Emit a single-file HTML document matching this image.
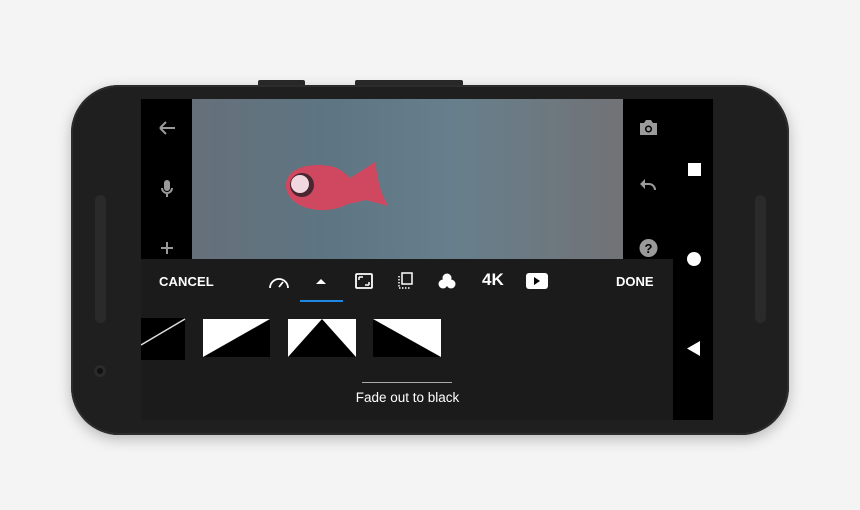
<!DOCTYPE html>
<html><head><style>
body{margin:0;width:860px;height:510px;background:#f4f4f4;overflow:hidden;position:relative;font-family:"Liberation Sans",sans-serif}
.a{position:absolute}
</style></head><body>
<div class="a" style="left:258px;top:80px;width:47px;height:8px;background:#2a2a2a;border-radius:2px"></div>
<div class="a" style="left:355px;top:80px;width:108px;height:8px;background:#2a2a2a;border-radius:2px"></div>
<div class="a" style="left:71px;top:85px;width:718px;height:350px;background:#1f1f1f;border-radius:48px;box-shadow:0 0 0 2px #2c2c2c inset,0 4px 14px rgba(0,0,0,.25)"></div>
<div class="a" style="left:95px;top:195px;width:11px;height:128px;background:#2a2a2a;border-radius:6px"></div>
<div class="a" style="left:755px;top:195px;width:11px;height:128px;background:#2a2a2a;border-radius:6px"></div>
<div class="a" style="left:94px;top:365px;width:12px;height:12px;background:#2b2b2b;border-radius:50%"></div>
<div class="a" style="left:97px;top:368px;width:6px;height:6px;background:#111;border-radius:50%"></div>
<div class="a" style="left:141px;top:99px;width:572px;height:321px;background:#000"></div>
<div class="a" style="left:192px;top:99px;width:431px;height:160px;background:linear-gradient(90deg,#66707a 0%,#5d7582 30%,#677f8c 60%,#717376 100%)"></div>
<svg class="a" style="left:280px;top:158px" width="112" height="58" viewBox="0 0 112 58"><path d="M6 30 C4 12 25 4 50 8 C60 10 66 16 70 20 L95 4 C98 20 98 30 108 48 L86 42 L68 46 C45 58 10 52 6 30Z" fill="#d0485f"/><circle cx="22" cy="27" r="12" fill="#4a2630"/><circle cx="20" cy="26" r="9" fill="#f1d8e0"/></svg>
<div class="a" style="left:141px;top:259px;width:532px;height:161px;background:#1b1b1b"></div>
<svg class="a" style="left:155px;top:115px" width="25" height="150" fill="none" stroke="#9a9a9a" stroke-width="2"><path d="M5 13H20M5 13L11 7M5 13L11 19"/><rect x="9" y="65" width="6" height="11" rx="3" fill="#9a9a9a" stroke="none"/><path d="M7 73a5 5 0 0 0 10 0M12 78v4"/><path d="M12 127v12M6 133h12"/></svg>
<svg class="a" style="left:636px;top:115px" width="25" height="150"><path d="M4 8h4l2-3h5l2 3h4v12h-17z" fill="#9a9a9a"/><circle cx="12.5" cy="14" r="3.5" fill="#000"/><circle cx="12.5" cy="14" r="2" fill="#9a9a9a"/><path d="M5 69h8a6 6 0 0 1 6 6" fill="none" stroke="#9a9a9a" stroke-width="2"/><path d="M4 69l5-5v10z" fill="#9a9a9a"/><circle cx="12.5" cy="133" r="9" fill="#9a9a9a"/><text x="12.5" y="138" font-size="13" font-weight="bold" text-anchor="middle" fill="#000">?</text></svg>
<div class="a" style="left:688px;top:163px;width:13px;height:13px;background:#fff"></div>
<div class="a" style="left:687px;top:252px;width:14px;height:14px;background:#fff;border-radius:50%"></div>
<svg class="a" style="left:687px;top:341px" width="14" height="15"><path d="M13 0v15L0 7.5z" fill="#fff"/></svg>
<div class="a" style="left:159px;top:274px;color:#fff;font-size:13px;font-weight:bold;letter-spacing:0.1px;-webkit-text-stroke:0">CANCEL</div>
<div class="a" style="left:616px;top:274px;color:#fff;font-size:13px;font-weight:bold">DONE</div>
<svg class="a" style="left:266px;top:268px" width="290" height="26" fill="none" stroke="#fff" stroke-width="1.8">
<path d="M4 20a9 9 0 1 1 18 0"/><path d="M13 19l4-5"/>
<path d="M50 16l5-5 5 5z" fill="#fff" stroke="none"/>
<rect x="90" y="6" width="16" height="14" rx="1"/><path d="M93 9h4M93 9v3M103 17h-4M103 17v-3" stroke-width="1.5"/>
<rect x="136" y="5" width="10" height="11" stroke-width="1.5"/><path d="M133 8v12h12" stroke-dasharray="1.5 1.5" stroke-width="1.5"/>
<circle cx="181" cy="10" r="4.5" fill="#fff" stroke="none"/><circle cx="177" cy="16" r="4.5" fill="#fff" stroke="none"/><circle cx="185" cy="16" r="4.5" fill="#fff" stroke="none"/>
<rect x="260" y="5" width="22" height="16" rx="3" fill="#fff" stroke="none"/><path d="M268 9v8l6-4z" fill="#000" stroke="none"/>
</svg>
<div class="a" style="left:482px;top:270px;color:#fff;font-size:17px;font-weight:bold">4K</div>
<div class="a" style="left:300px;top:300px;width:43px;height:2px;background:#1e88e5"></div>
<svg class="a" style="left:141px;top:318px" width="310" height="42">
<rect x="0" y="0" width="44" height="42" fill="#000"/><path d="M0 27L44 1" stroke="#ddd" stroke-width="1.5"/>
<rect x="62" y="1" width="67" height="38" fill="#000"/><path d="M62 1h67L62 39z" fill="#fff"/>
<rect x="147" y="1" width="68" height="38" fill="#fff"/><path d="M147 39L181 1L215 39z" fill="#000"/>
<rect x="232" y="1" width="68" height="38" fill="#000"/><path d="M232 1h68v38z" fill="#fff"/>
</svg>
<div class="a" style="left:362px;top:382px;width:90px;height:1px;background:#aaa"></div>
<div class="a" style="left:330px;top:390px;width:155px;text-align:center;color:#fff;font-size:13.5px">Fade out to black</div>
</body></html>
